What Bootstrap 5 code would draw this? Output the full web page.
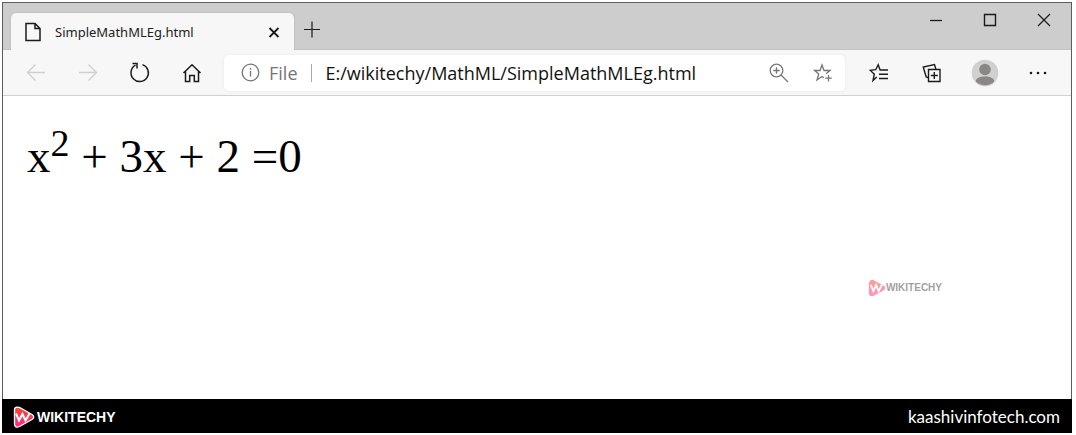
<!DOCTYPE html>
<html lang="en">
<head>
<meta charset="utf-8">
<meta name="viewport" content="width=device-width, initial-scale=1">
<title>SimpleMathMLEg.html</title>
<link href="https://cdn.jsdelivr.net/npm/bootstrap@5.3.0/dist/css/bootstrap.min.css" rel="stylesheet">
<style>
  body { background: #fff; font-family: "Open Sans", "Noto Sans", sans-serif; color: #111; }
  .page-shell { padding: 2px 4px 2px 2px; }
  .browser-frame { border: 1px solid #5c5c5c; border-bottom: 0; }
  .tab-strip { background: #cdcdcd; border-bottom: 1px solid #c2c2c2; height: 47px; padding-left: 8px; }
  .page-tab { width: 283px; height: 37px; margin-top: 10px; margin-bottom: -1px; padding: 0 13px; background: #f7f7f7; border-radius: 5px 5px 0 0; box-shadow: 0 0 2px #aaa; clip-path: inset(-3px -3px 0 -3px); }
  .tab-title { font-family: "Noto Sans", sans-serif; font-size: 13px; line-height: 20px; margin-left: 13px; color: #222; text-decoration: none; }
  .plain-btn { border: 0; background: none; padding: 0; color: #1b1b1b; display: flex; align-items: center; justify-content: center; flex: none; }
  .plain-btn:disabled { color: #cfcfcf; }
  .win-btn { width: 54px; height: 34px; }
  .tool-row { background: #f7f7f7; border-bottom: 1px solid #d0d0d0; height: 46px; padding: 0 7px; }
  .nav-btn { width: 52px; height: 36px; }
  .side-btn { width: 53px; height: 36px; }
  .address-box { height: 36px; margin: 0 7px 0 6px; background: #fff; border-radius: 5px; box-shadow: 0 0 3px #e6e6e6; color: #767676; }
  .scheme-label { font-size: 18px; line-height: 24px; color: #767676; gap: 9px; padding-left: 17px; }
  .scheme-rule { width: 1px; height: 18px; background: #a8a8a8; margin: 0 14px 0 13px; }
  .address-input { border: 0; outline: 0; padding: 0; background: none; font-size: 18px; line-height: 24px; color: #111; min-width: 0; }
  .address-box .plain-btn { color: #767676; width: 44px; height: 36px; }
  .viewport-area { padding: 32px 24px; min-height: 280px; }
  .equation { font-family: "Liberation Serif", serif; font-size: 47px; line-height: 56px; color: #000; margin: 0; }
  .equation sup { font-size: 38px; line-height: 0; top: 0; vertical-align: 16px; }
  .brand-name { font-family: "Liberation Sans", sans-serif; }
  .watermark { opacity: .5; position: absolute; right: 129px; bottom: 101px; }
  .watermark .brand-name { font-size: 10px; line-height: 20px; font-weight: 700; color: #444; }
  .site-bar { background: #000; height: 34px; padding: 2px 12px 0 11px; }
  .site-bar .brand-name { font-size: 14px; line-height: 20px; font-weight: 700; color: #fff; }
  .site-bar .brand { gap: 2px; }
  .site-link { font-family: Lato, sans-serif; color: #fff; text-decoration: none; font-size: 17px; line-height: 24px; }
</style>
</head>
<body>
<div class="page-shell d-flex flex-column min-vh-100">
  <div class="browser-frame d-flex flex-column flex-grow-1">
    <header>
      <div class="tab-strip d-flex align-items-start">
        <div class="page-tab d-flex align-items-center">
          <svg width="18" height="20" viewBox="0 0 18 20" fill="none" stroke="#1b1b1b" stroke-width="1.5"><path d="M2 1.5h9l5 5v12H2zM11 1.5v5h5"/></svg>
          <a class="tab-title" href="#">SimpleMathMLEg.html</a>
          <button class="plain-btn ms-auto" type="button" aria-label="Close tab"><svg width="14" height="14" viewBox="0 0 14 14" stroke="currentColor" stroke-width="1.8"><path d="M2.5 3l9 9M11.500 3l-9 9"/></svg></button>
        </div>
        <button class="plain-btn new-tab ms-2 mt-3" type="button" aria-label="New tab"><svg width="20" height="22" viewBox="0 0 20 22" stroke="currentColor" stroke-width="1.200"><path d="M2 10.500h16M10 2.500v16"/></svg></button>
        <div class="d-flex ms-auto">
          <button class="plain-btn win-btn" type="button" aria-label="Minimize"><svg width="14" height="14" viewBox="0 0 14 14" stroke="currentColor" stroke-width="1.300"><path d="M1 7.500h12"/></svg></button>
          <button class="plain-btn win-btn" type="button" aria-label="Maximize"><svg width="14" height="14" viewBox="0 0 14 14" fill="none" stroke="currentColor" stroke-width="1.400"><path d="M1.500 1.500h11v11h-11z"/></svg></button>
          <button class="plain-btn win-btn" type="button" aria-label="Close"><svg width="14" height="14" viewBox="0 0 14 14" stroke="currentColor" stroke-width="1.200"><path d="M1 1l12 12M13 1L1 13"/></svg></button>
        </div>
      </div>
      <div class="tool-row d-flex align-items-center">
        <button class="plain-btn nav-btn" type="button" aria-label="Back" disabled><svg width="20" height="20" viewBox="0 0 20 20" fill="none" stroke="currentColor" stroke-width="1.300"><path d="M19 9.500H1.500M9.500 1.500l-8 8 8 8"/></svg></button>
        <button class="plain-btn nav-btn" type="button" aria-label="Forward" disabled><svg width="20" height="20" viewBox="0 0 20 20" fill="none" stroke="currentColor" stroke-width="1.300"><path d="M1 9.500h17.500M10.500 1.500l8 8-8 8"/></svg></button>
        <button class="plain-btn nav-btn" type="button" aria-label="Reload"><svg width="22" height="22" viewBox="0 0 22 22" fill="none" stroke="currentColor" stroke-width="1.500"><path d="M13.500 2.600A8.700 8.700 0 1 1 6.500 3.200M3.500 1.500h4.500v5"/></svg></button>
        <button class="plain-btn nav-btn" type="button" aria-label="Home"><svg width="20" height="20" viewBox="0 0 20 20" fill="none" stroke="currentColor" stroke-width="1.500"><path d="M1.500 10L10 1.800 18.500 10M3.500 8.500v10h4.200v-6h4.600v6h4.200v-10"/></svg></button>
        <div class="address-box d-flex align-items-center flex-grow-1">
          <label class="scheme-label d-flex align-items-center" for="address">
            <svg width="19" height="19" viewBox="0 0 19 19" fill="none" stroke="#767676" stroke-width="1.300"><circle cx="9.500" cy="9.500" r="8.300"/><path d="M9.500 8v5.500M9.500 5v1.700"/></svg>
            File
          </label>
          <span class="scheme-rule"></span>
          <input class="address-input flex-grow-1" id="address" type="text" value="E:/wikitechy/MathML/SimpleMathMLEg.html">
          <button class="plain-btn" type="button" aria-label="Zoom in"><svg width="20" height="20" viewBox="0 0 20 20" fill="none" stroke="currentColor" stroke-width="1.300"><circle cx="7.500" cy="7.500" r="6.300"/><path d="M12 12l7 7M4.300 7.500h6.400M7.500 4.300v6.400"/></svg></button>
          <button class="plain-btn" type="button" aria-label="Add to favorites"><svg width="20" height="20" viewBox="0 0 20 20" fill="none" stroke="currentColor" stroke-width="1.300"><path d="M10.800 14.800l-1.800-1.300L4 17l1.800-6L1.500 7.500H7L9 2l2 5.500h6l-4 3.200M15.500 12v6.500M12.200 15.200h6.600"/></svg></button>
        </div>
        <button class="plain-btn side-btn" type="button" aria-label="Favorites"><svg width="20" height="20" viewBox="0 0 20 20" fill="none" stroke="currentColor" stroke-width="1.400"><path d="M7.800 14L4 17.500l1.300-6.300L1.200 7.300l5.500-.600L9.200 1.800l1.900 5.200H19M10 11.300h9M10 15.500h9"/></svg></button>
        <button class="plain-btn side-btn" type="button" aria-label="Collections"><svg width="20" height="20" viewBox="0 0 20 20" fill="none" stroke="currentColor" stroke-width="1.400"><path d="M6.500 6.500h11.500v12h-11.500zM12.300 9v7M8.800 12.500h7M6.500 14.800L4.200 14 1.200 4 12.500 1.500l1.500 5"/></svg></button>
        <button class="plain-btn side-btn" type="button" aria-label="Profile"><svg width="28" height="28" viewBox="0 0 28 28"><circle cx="14" cy="14" r="13.300" fill="#d2d0ce"/><circle cx="14" cy="10.500" r="5.800" fill="#8a8886"/><path d="M4.800 22.500c0-3.500 4-5 9.200-5s9.200 1.500 9.200 5c-4.500 5-13.500 5-18.400 0z" fill="#8a8886"/></svg></button>
        <button class="plain-btn side-btn" type="button" aria-label="More"><svg width="20" height="6" viewBox="0 0 20 6" fill="currentColor"><circle cx="3" cy="3" r="1.300"/><circle cx="10" cy="3" r="1.300"/><circle cx="17" cy="3" r="1.300"/></svg></button>
      </div>
    </header>
    <main class="viewport-area position-relative flex-grow-1">
      <p class="equation">x<sup>2</sup> + 3x + 2 =0</p>
      <div class="watermark d-flex align-items-center">
        <svg width="18" height="20" viewBox="0 0 22 22"><defs><linearGradient id="play" x1="0" y1="0" x2="0" y2="1"><stop offset="0" stop-color="#f5482f"/><stop offset="1" stop-color="#fa2c86"/></linearGradient></defs><path d="M3 1.500l3-.5 13 7c3 2 3 4 0 6L6 21l-4-.500-1-3v-13z" fill="url(#play)"/><path d="M3.500 7l3 8 3.500-7.500 3 7.500 4-8" fill="none" stroke="#fff" stroke-width="2.200"/></svg>
        <span class="brand-name">WIKITECHY</span>
      </div>
    </main>
  </div>
  <footer class="site-bar d-flex align-items-center justify-content-between">
    <div class="brand d-flex align-items-center">
      <svg width="22" height="22" viewBox="0 0 22 22"><path d="M3.500 1.200l3 .3 12.500 7c2.300 1.500 2.300 3.500 0 5L6.500 20.500c-3 1.200-5 .500-5-2.500V4c0-1.500.500-2.500 2-2.800z" fill="url(#play)" stroke="#fff" stroke-width="1.300"/><path d="M3 7.500l3 7L9.500 8l3 6.500 4-7" fill="none" stroke="#fff" stroke-width="2"/></svg>
      <span class="brand-name">WIKITECHY</span>
    </div>
    <a class="site-link" href="#">kaashivinfotech.com</a>
  </footer>
</div>
<script src="https://cdn.jsdelivr.net/npm/bootstrap@5.3.0/dist/js/bootstrap.bundle.min.js"></script>
</body>
</html>
